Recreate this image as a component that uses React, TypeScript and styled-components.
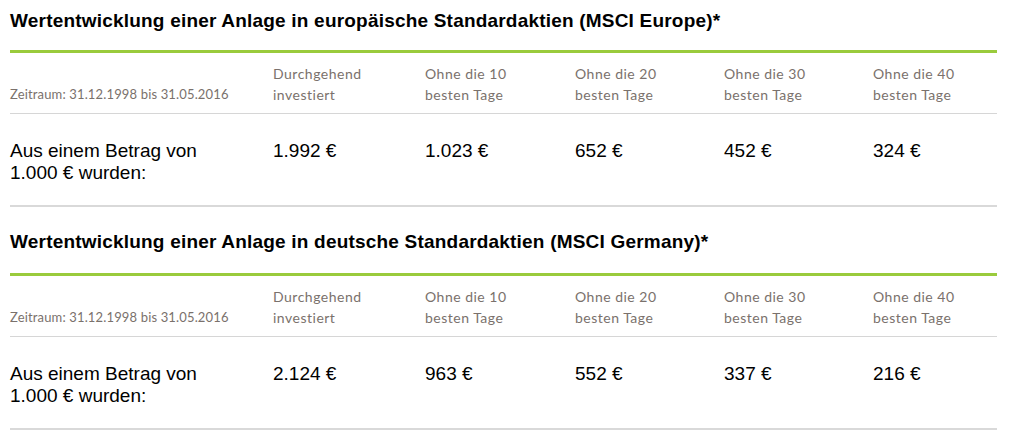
import React from "react";
import styled, { createGlobalStyle } from "styled-components";

const Global = createGlobalStyle`
  html, body { margin: 0; padding: 0; background: #fff; }
  body { font-family: "Liberation Sans", Arial, sans-serif; }
`;

const Page = styled.div`
  padding: 0 25px 0 10px;
  width: 987px;
`;

const Section = styled.section`
  display: flex;
  flex-direction: column;
`;

const Title = styled.h2<{ $first?: boolean }>`
  margin: 0;
  padding: ${(p) => (p.$first ? "11px 0 19px" : "25px 0 21px")};
  font-family: "Liberation Sans", Arial, sans-serif;
  font-weight: bold;
  font-size: 19px;
  letter-spacing: 0.2px;
  line-height: 20px;
  color: #000;
  border-bottom: 3px solid #9acb3c;
`;

const Grid = styled.div`
  display: grid;
  grid-template-columns: 263px 152px 150px 149px 149px 1fr;
`;

const HeadRow = styled(Grid)`
  align-items: end;
  height: 61px;
  padding-bottom: 8px;
  box-sizing: border-box;
  border-bottom: 1px solid #d6d6d6;
  font-family: Lato, "Open Sans", sans-serif;
  font-size: 14px;
  letter-spacing: 0.5px;
  line-height: 21px;
  color: #7a716c;
`;

const HeadCell = styled.div<{ $period?: boolean }>`
  font-size: ${(p) => (p.$period ? "13px" : "14px")};
  letter-spacing: ${(p) => (p.$period ? "0.15px" : "0.5px")};
`;

const DataRow = styled(Grid)`
  height: 93px;
  padding-top: 26px;
  box-sizing: border-box;
  border-bottom: 2px solid #d9d9d9;
  font-size: 19px;
  line-height: 22px;
  color: #000;
`;

const Cell = styled.div``;

type Data = { title: string; values: string[] };

const heads = [
  ["Durchgehend", "investiert"],
  ["Ohne die 10", "besten Tage"],
  ["Ohne die 20", "besten Tage"],
  ["Ohne die 30", "besten Tage"],
  ["Ohne die 40", "besten Tage"],
];

const data: Data[] = [
  {
    title:
      "Wertentwicklung einer Anlage in europäische Standardaktien (MSCI Europe)*",
    values: ["1.992 €", "1.023 €", "652 €", "452 €", "324 €"],
  },
  {
    title:
      "Wertentwicklung einer Anlage in deutsche Standardaktien (MSCI Germany)*",
    values: ["2.124 €", "963 €", "552 €", "337 €", "216 €"],
  },
];

export default function App() {
  return (
    <Page>
      <Global />
      {data.map((d, i) => (
        <Section key={i}>
          <Title $first={i === 0}>{d.title}</Title>
          <HeadRow>
            <HeadCell $period>Zeitraum: 31.12.1998 bis 31.05.2016</HeadCell>
            {heads.map((h, j) => (
              <HeadCell key={j}>
                {h[0]}
                <br />
                {h[1]}
              </HeadCell>
            ))}
          </HeadRow>
          <DataRow>
            <Cell>
              Aus einem Betrag von
              <br />
              1.000 € wurden:
            </Cell>
            {d.values.map((v, j) => (
              <Cell key={j}>{v}</Cell>
            ))}
          </DataRow>
        </Section>
      ))}
    </Page>
  );
}
